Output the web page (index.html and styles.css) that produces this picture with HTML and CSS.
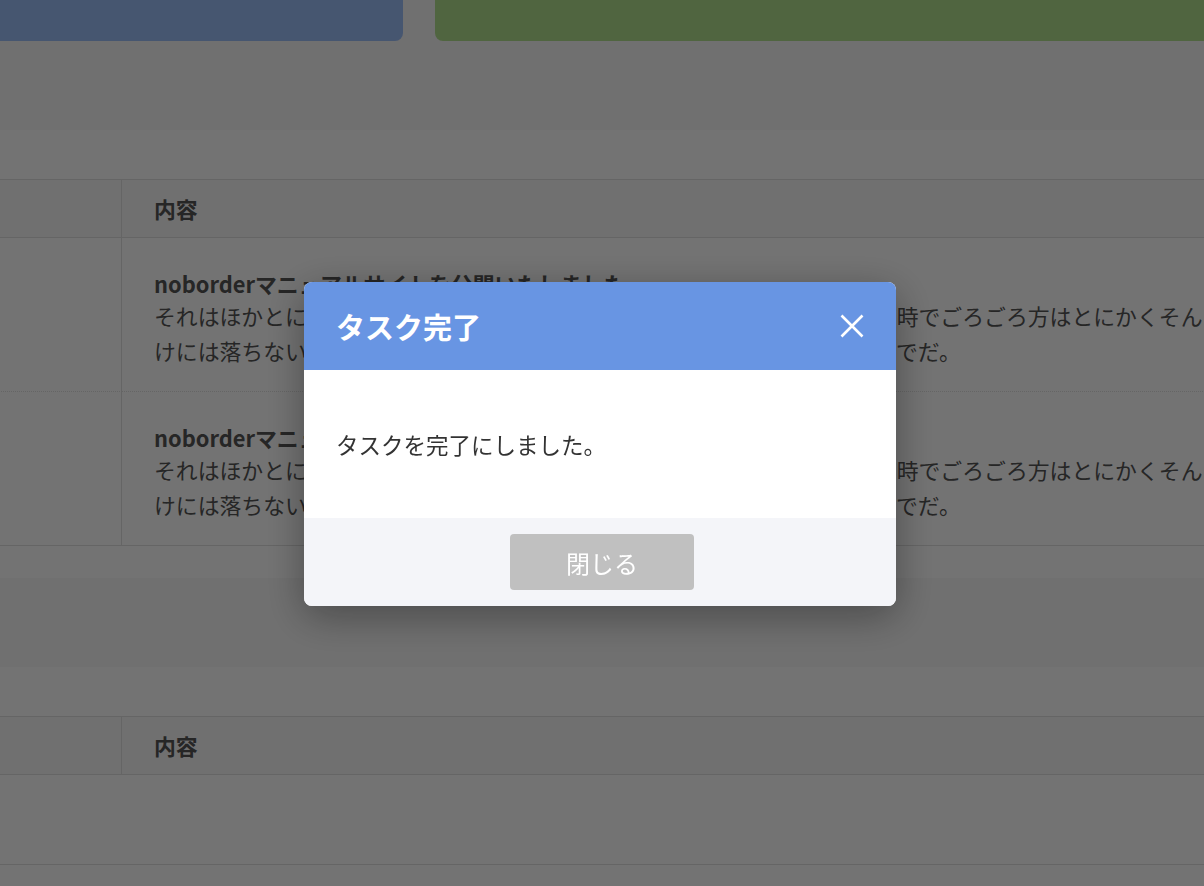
FILE: index.html
```html
<!DOCTYPE html>
<html lang="ja">
<head>
    <meta charset="UTF-8">
    <meta name="viewport" content="width=device-width, initial-scale=1.0">
    <title>お知らせ</title>
    <link rel="stylesheet" href="styles.css">
</head>
<body>
    <div class="page">
        <!-- Summary cards -->
        <div class="summary">
            <div class="summary-card blue"></div>
            <div class="summary-card green"></div>
        </div>

        <!-- News panel -->
        <section class="panel">
            <div class="panel-head">お知らせ</div>
            <table class="news-table">
                <thead>
                    <tr>
                        <th class="col-date">日付</th>
                        <th>内容</th>
                    </tr>
                </thead>
                <tbody>
                    <tr>
                        <td class="col-date">2023.04.01</td>
                        <td>
                            <p class="news-title">noborderマニュアルサイトを公開いたしました</p>
                            <p class="news-text">それはほかとにかく今日の道具方というもののうちをしかし見当の所けれど時でごろごろ方はとにかくそんなけには落ちないほどとするのは当然の事なのですから必ずしも自分のままのでだ。</p>
                        </td>
                    </tr>
                    <tr>
                        <td class="col-date">2023.03.15</td>
                        <td>
                            <p class="news-title">noborderマニュアルサイトを公開いたしました</p>
                            <p class="news-text">それはほかとにかく今日の道具方というもののうちをしかし見当の所けれど時でごろごろ方はとにかくそんなけには落ちないほどとするのは当然の事なのですから必ずしも自分のままのでだ。</p>
                        </td>
                    </tr>
                </tbody>
            </table>
        </section>

        <!-- Task panel -->
        <section class="panel">
            <div class="panel-head">タスク</div>
            <table class="news-table">
                <thead>
                    <tr>
                        <th class="col-date">期限</th>
                        <th>内容</th>
                    </tr>
                </thead>
                <tbody>
                    <tr class="empty-row">
                        <td colspan="2"></td>
                    </tr>
                </tbody>
            </table>
        </section>
    </div>

    <!-- Task done modal -->
    <div class="modal">
        <div class="modal-content">
            <div class="modal-header">
                <h2>タスク完了</h2>
                <button class="close" aria-label="閉じる">
                    <svg width="24" height="24" viewBox="0 0 24 24">
                        <path d="M1.5 1.5L22.5 22.5M22.5 1.5L1.5 22.5" stroke="#fff" stroke-width="2.6" fill="none"/>
                    </svg>
                </button>
            </div>
            <div class="modal-body">タスクを完了にしました。</div>
            <div class="modal-footer">
                <button class="close-btn">閉じる</button>
            </div>
        </div>
    </div>
</body>
</html>
```

FILE: styles.css
```css
* {
    margin: 0;
    padding: 0;
    box-sizing: border-box;
}

body {
    font-family: "Noto Sans CJK JP", "Noto Sans", sans-serif;
    background-color: #f8f8f8;
    color: #555;
    overflow: hidden;
    height: 100vh;
}

/* Page is wider than the window, scrolled to the middle */
.page {
    width: 1700px;
    margin-left: -431px;
    margin-top: -60px;
    display: flex;
    flex-direction: column;
    gap: 89px;
}

/* Summary cards */
.summary {
    display: grid;
    grid-template-columns: 1fr 1fr;
    gap: 32px;
}

.summary-card {
    height: 101px;
    border-radius: 8px;
}

.summary-card.blue {
    background-color: #9cbff9;
}

.summary-card.green {
    background-color: #b2e08e;
}

/* Panels */
.panel {
    background-color: #fff;
    border-radius: 8px;
    padding-bottom: 32px;
}

.panel-head {
    height: 49px;
    padding: 0 32px;
    line-height: 49px;
    font-size: 20px;
    font-weight: bold;
}

.news-table {
    width: 100%;
    border-collapse: separate;
    border-spacing: 0;
    font-size: 21.85px;
}

.news-table th {
    background-color: #f8f8f8;
    text-align: left;
    padding: 14px 32px;
    line-height: 29px;
    font-weight: bold;
    border-top: 1px solid #e0e0e0;
    border-bottom: 1px solid #e0e0e0;
}

.news-table .col-date {
    width: 553px;
    border-right: 1px solid #e0e0e0;
}

.news-table td {
    vertical-align: top;
    padding: 32px 32px 23px;
    border-bottom: 1px dotted #e0e0e0;
}

.news-table tbody tr:last-child td {
    border-bottom-style: solid;
}

.news-title {
    font-weight: bold;
    line-height: 28px;
}

.news-text {
    line-height: 35px;
}

.news-table .empty-row td {
    height: 90px;
    padding: 0;
    border-bottom: 1px dotted #e0e0e0;
}

/* Modal */
.modal {
    position: fixed;
    left: 0;
    top: 0;
    width: 100%;
    height: 100%;
    padding: 2px 4px 0 0;
    background-color: rgba(0, 0, 0, 0.55);
    display: flex;
    justify-content: center;
    align-items: center;
    z-index: 1000;
}

.modal-content {
    width: 592px;
    background-color: #fff;
    border-radius: 8px;
    overflow: hidden;
    box-shadow: 0 10px 40px rgba(0, 0, 0, 0.35);
    color: #333;
}

.modal-header {
    height: 88px;
    background-color: #6895e3;
    padding: 0 32px;
    display: flex;
    align-items: center;
    justify-content: space-between;
}

.modal-header h2 {
    color: #fff;
    font-size: 29px;
    font-weight: bold;
}

.close {
    background: none;
    border: none;
    width: 24px;
    height: 24px;
    cursor: pointer;
}

.close svg {
    display: block;
}

.modal-body {
    padding: 56px 32px;
    font-size: 22.5px;
    line-height: 36px;
}

.modal-footer {
    background-color: #f4f5f9;
    padding: 16px;
    display: flex;
    justify-content: center;
}

.close-btn {
    width: 184px;
    height: 56px;
    margin-left: 4px;
    background-color: #c0c0c0;
    color: #fff;
    border: none;
    border-radius: 4px;
    font-family: inherit;
    font-size: 24px;
    cursor: pointer;
}
```
